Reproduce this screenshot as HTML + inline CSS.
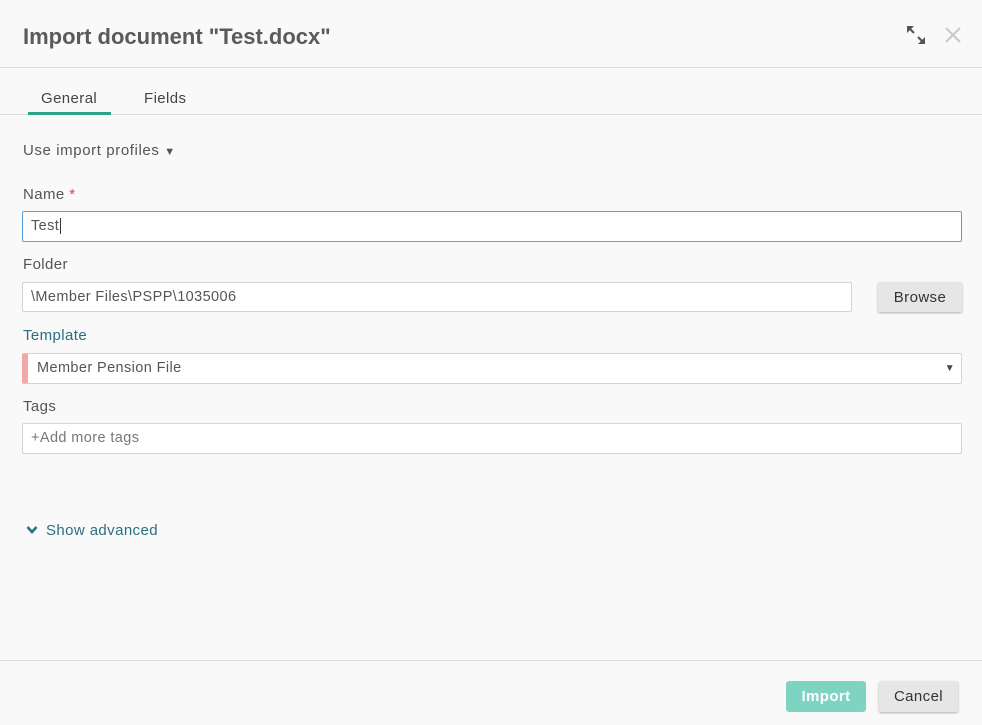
<!DOCTYPE html>
<html><head><meta charset="utf-8"><style>
*{box-sizing:border-box;margin:0;padding:0}
body{width:982px;height:725px;background:#f9f9f9;font-family:"Liberation Sans",sans-serif;color:#555;position:relative;overflow:hidden;font-size:15px;letter-spacing:.4px}
.a{position:absolute}
.inp{position:absolute;background:#fff;border:1px solid #d4d4d4;border-radius:2px;font-size:14.5px;color:#555;padding-left:8px;line-height:29px}
.lbl{position:absolute;left:23px;font-size:15px;color:#555}
.btn{position:absolute;background:#e6e6e6;border-radius:2px;box-shadow:0 1px 2px rgba(0,0,0,.3);text-align:center;font-size:15px;color:#333}
</style></head><body>
<div class="a" style="left:23px;top:24px;font-size:22px;color:#5a5a5a;font-weight:bold;letter-spacing:0">Import document "Test.docx"</div>
<svg class="a" style="left:905px;top:24px" width="22" height="22" viewBox="0 0 22 22"><g fill="#555" stroke="#555" stroke-width="2"><line x1="3" y1="3" x2="9" y2="9"/><line x1="13" y1="13" x2="19" y2="19"/></g><polygon points="2,2 9,2 2,9" fill="#555"/><polygon points="20,20 13,20 20,13" fill="#555"/></svg>
<svg class="a" style="left:944px;top:26px" width="18" height="18"><g stroke="#c8c8c8" stroke-width="2"><line x1="2" y1="2" x2="16" y2="16"/><line x1="16" y1="2" x2="2" y2="16"/></g></svg>
<div class="a" style="left:0;top:67px;width:982px;height:1px;background:#ddd"></div>
<div class="a" style="left:41px;top:90px;font-size:15px;color:#444">General</div>
<div class="a" style="left:144px;top:90px;font-size:15px;color:#444">Fields</div>
<div class="a" style="left:0;top:114px;width:982px;height:1px;background:#ddd"></div>
<div class="a" style="left:28px;top:112px;width:83px;height:3px;background:#2aa58a"></div>
<div class="lbl" style="top:142px;letter-spacing:.6px">Use import profiles <span style="font-size:11px">▼</span></div>
<div class="lbl" style="top:186px">Name <span style="color:#e04040">*</span></div>
<div class="inp" style="left:22px;top:211px;width:940px;height:31px;border:1px solid #5a9fdc">Test<span style="border-left:1px solid #333;margin-left:1px"></span></div>
<div class="lbl" style="top:256px">Folder</div>
<div class="inp" style="left:22px;top:282px;width:830px;height:30px">\Member Files\PSPP\1035006</div>
<div class="btn" style="left:878px;top:282px;width:84px;height:30px;line-height:31px">Browse</div>
<div class="lbl" style="top:327px;color:#2a6f80">Template</div>
<div class="inp" style="left:22px;top:353px;width:940px;height:31px;border-left:6px solid #f2a8a8;padding-left:9px">Member Pension File<span style="position:absolute;right:6px;font-size:10px;color:#444">▼</span></div>
<div class="lbl" style="top:398px">Tags</div>
<div class="inp" style="left:22px;top:423px;width:940px;height:31px;color:#777">+Add more tags</div>
<svg class="a" style="left:26px;top:525px" width="12" height="10"><polyline points="1.5,2 6,7 10.5,2" fill="none" stroke="#2a6f80" stroke-width="2.6"/></svg>
<div class="a" style="left:46px;top:522px;font-size:15px;color:#2a6f80">Show advanced</div>
<div class="a" style="left:0;top:660px;width:982px;height:1px;background:#ddd"></div>
<div class="a" style="left:786px;top:681px;width:80px;height:31px;background:#7fd3c2;border-radius:3px;color:#fff;font-weight:bold;text-align:center;line-height:31px;font-size:15px">Import</div>
<div class="btn" style="left:879px;top:681px;width:79px;height:31px;line-height:31px">Cancel</div>
</body></html>
